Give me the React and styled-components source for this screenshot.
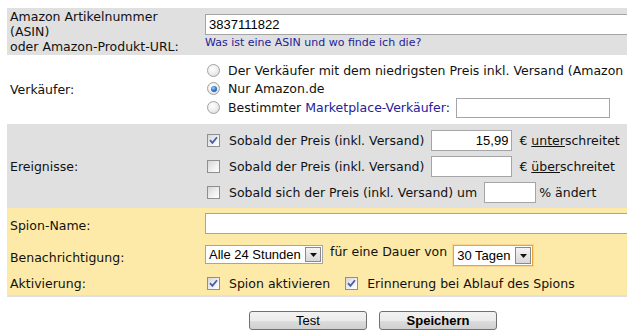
import React from 'react';
import styled, { createGlobalStyle, css } from 'styled-components';

const grayBg = '#e0e0e0';
const yellowBg = '#fdeaa8';
const linkColour = '#22229a';
const fieldBorder = '#a5a5a5';

const GlobalStyle = createGlobalStyle`
	html, body {
		margin: 0;
		background: #ffffff;
		overflow: hidden;
	}
	body {
		padding: 8px 0 0 7px;
		font-family: 'DejaVu Sans', Verdana, sans-serif;
		font-size: 12.5px;
		color: #111;
	}
`;

const Form = styled.div`
	width: 732px;
`;

const Row = styled.div`
	display: grid;
	grid-template-columns: 198px 1fr;
	height: ${(p) => p.$h}px;
	background: ${(p) =>
		p.$tone === 'gray' ? grayBg : p.$tone === 'yellow' ? yellowBg : '#ffffff'};
`;

const Label = styled.div`
	align-self: center;
	padding-left: 3px;
	line-height: 15px;
	white-space: nowrap;
`;

const Value = styled.div`
	align-self: ${(p) => p.$align || 'center'};
	padding-top: ${(p) => p.$pt || 0}px;
	display: flex;
	flex-direction: column;
	white-space: nowrap;
`;

const Line = styled.div`
	display: flex;
	align-items: ${(p) => p.$items || 'center'};
	height: ${(p) => p.$h}px;
`;

const TextInput = styled.input`
	box-sizing: border-box;
	width: ${(p) => p.$w}px;
	height: ${(p) => p.$h || 21}px;
	border: 1px solid ${fieldBorder};
	background: #fff;
	margin: 0;
	padding: 0 3px;
	font-family: 'Liberation Sans', Arial, sans-serif;
	font-size: 13px;
	color: #000;
	text-align: ${(p) => (p.$right ? 'right' : 'left')};
	outline: none;
`;

const HelpLink = styled.a`
	font-size: 11px;
	line-height: 14px;
	color: ${linkColour};
	text-decoration: none;
	margin-top: 1px;
`;

const InlineLink = styled.a`
	color: ${linkColour};
	text-decoration: none;
`;

const PlainText = styled.span`
	margin-top: ${(p) => p.$mt || 0}px;
`;

const RadioDot = styled.span`
	position: relative;
	box-sizing: border-box;
	width: 13px;
	height: 13px;
	margin: 0 8px 0 2px;
	border-radius: 50%;
	border: 1px solid #a2a2a2;
	background: radial-gradient(circle at 40% 35%, #ffffff 0%, #ececec 55%, #cfcfcf 100%);
	flex: none;
	${(p) =>
		p.$on &&
		css`
			&::after {
				content: '';
				position: absolute;
				left: 2.5px;
				top: 2.5px;
				width: 6px;
				height: 6px;
				border-radius: 50%;
				background: radial-gradient(circle at 40% 35%, #9fd3ff 0%, #2f7fd0 45%, #12407e 100%);
			}
		`}
`;

const CheckBox = styled.span`
	box-sizing: border-box;
	display: inline-flex;
	align-items: center;
	justify-content: center;
	width: 13px;
	height: 13px;
	margin: 0 9px 0 2px;
	border: 1px solid #8e8f8f;
	background: linear-gradient(135deg, #d6d6d6 0%, #f1f1f1 60%, #ffffff 100%);
	flex: none;
`;

const Check = ({ on }) => (
	<CheckBox>
		{on && (
			<svg width="9" height="9" viewBox="0 0 9 9">
				<path d="M1 4.2 L3.4 6.8 L8 1.2" fill="none" stroke="#4b5ca6" strokeWidth="1.8" />
			</svg>
		)}
	</CheckBox>
);

const SelectBox = styled.div`
	box-sizing: border-box;
	display: flex;
	align-items: stretch;
	width: ${(p) => p.$w}px;
	height: ${(p) => p.$h}px;
	background: #fff;
	border: 1px solid ${(p) => (p.$focus ? '#e3a53c' : fieldBorder)};
	box-shadow: ${(p) => (p.$focus ? '0 0 0 1px #f8d68e' : 'none')};
	font-family: 'Liberation Sans', Arial, sans-serif;
	font-size: 13px;
	color: #000;
	flex: none;
`;

const SelectText = styled.span`
	flex: 1;
	display: flex;
	align-items: center;
	padding-left: 3px;
`;

const SelectArrow = styled.span`
	box-sizing: border-box;
	width: 16px;
	display: flex;
	align-items: center;
	justify-content: center;
	margin: 1px;
	border: 1px solid #8a8a8a;
	background: linear-gradient(#f4f4f4, #d8d8d8);
`;

const Select = ({ w, h, focus, children }) => (
	<SelectBox $w={w} $h={h} $focus={focus}>
		<SelectText>{children}</SelectText>
		<SelectArrow>
			<svg width="7" height="4" viewBox="0 0 7 4">
				<path d="M0 0 H7 L3.5 4 Z" fill="#111" />
			</svg>
		</SelectArrow>
	</SelectBox>
);

const YellowSection = styled.div`
	border-bottom: 2px solid ${grayBg};
`;

const Buttons = styled.div`
	display: flex;
	justify-content: center;
	gap: 12px;
	padding-top: 14px;
`;

const Button = styled.button`
	box-sizing: border-box;
	width: 118px;
	height: 19px;
	margin: 0;
	padding: 0;
	border: 1px solid #707070;
	border-radius: 3px;
	background: linear-gradient(#f2f2f2 0%, #ebebeb 50%, #dddddd 51%, #cfcfcf 100%);
	font-family: 'Liberation Sans', Arial, sans-serif;
	font-size: 13px;
	font-weight: ${(p) => (p.$bold ? 700 : 400)};
	color: #000;
`;

const Gap = styled.span`
	display: inline-block;
	flex: none;
	width: ${(p) => p.$w}px;
`;

export default function App() {
	return (
		<>
			<GlobalStyle />
			<Form>
				<Row $tone="gray" $h={47}>
					<Label>
						Amazon Artikelnummer
						<br />
						(ASIN)
						<br />
						oder Amazon-Produkt-URL:
					</Label>
					<Value>
						<TextInput $w={520} defaultValue="3837111822" />
						<HelpLink href="#">Was ist eine ASIN und wo finde ich die?</HelpLink>
					</Value>
				</Row>

				<Row $h={69}>
					<Label>Verkäufer:</Label>
					<Value>
						<Line $h={18}>
							<RadioDot />
							Der Verkäufer mit dem niedrigsten Preis inkl. Versand (Amazon
						</Line>
						<Line $h={18}>
							<RadioDot $on />
							Nur Amazon.de
						</Line>
						<Line $h={20}>
							<RadioDot />
							Bestimmter&nbsp;<InlineLink href="#">Marketplace-Verkäufer</InlineLink>:
							<Gap $w={6} />
							<TextInput $w={154} $h={20} />
						</Line>
					</Value>
				</Row>

				<Row $tone="gray" $h={84}>
					<Label>Ereignisse:</Label>
					<Value>
						<Line $h={26}>
							<Check on />
							Sobald der Preis (inkl. Versand)
							<Gap $w={7} />
							<TextInput $w={81} $right defaultValue="15,99" />
							<Gap $w={7} />
							€&nbsp;<u>unter</u>schreitet
						</Line>
						<Line $h={26}>
							<Check />
							Sobald der Preis (inkl. Versand)
							<Gap $w={7} />
							<TextInput $w={81} />
							<Gap $w={7} />
							€&nbsp;<u>über</u>schreitet
						</Line>
						<Line $h={26}>
							<Check />
							Sobald sich der Preis (inkl. Versand) um
							<Gap $w={7} />
							<TextInput $w={52} />
							<Gap $w={3} />
							% ändert
						</Line>
					</Value>
				</Row>

				<YellowSection>
					<Row $tone="yellow" $h={34}>
						<Label>Spion-Name:</Label>
						<Value $align="start" $pt={5}>
							<TextInput $w={520} />
						</Value>
					</Row>
					<Row $tone="yellow" $h={30}>
						<Label>Benachrichtigung:</Label>
						<Value $align="start" $pt={3}>
							<Line $h={21} $items="flex-start">
								<Select w={118} h={19}>
									Alle 24 Stunden
								</Select>
								<Gap $w={7} />
								<PlainText $mt={-1}>für eine Dauer von</PlainText>
								<Gap $w={6} />
								<Select w={80} h={21} focus>
									30 Tagen
								</Select>
							</Line>
						</Value>
					</Row>
					<Row $tone="yellow" $h={23}>
						<Label>Aktivierung:</Label>
						<Value>
							<Line $h={20}>
								<Check on />
								Spion aktivieren
								<Gap $w={13} />
								<Check on />
								Erinnerung bei Ablauf des Spions
							</Line>
						</Value>
					</Row>
				</YellowSection>

				<Buttons>
					<Button type="button">Test</Button>
					<Button type="button" $bold>
						Speichern
					</Button>
				</Buttons>
			</Form>
		</>
	);
}
